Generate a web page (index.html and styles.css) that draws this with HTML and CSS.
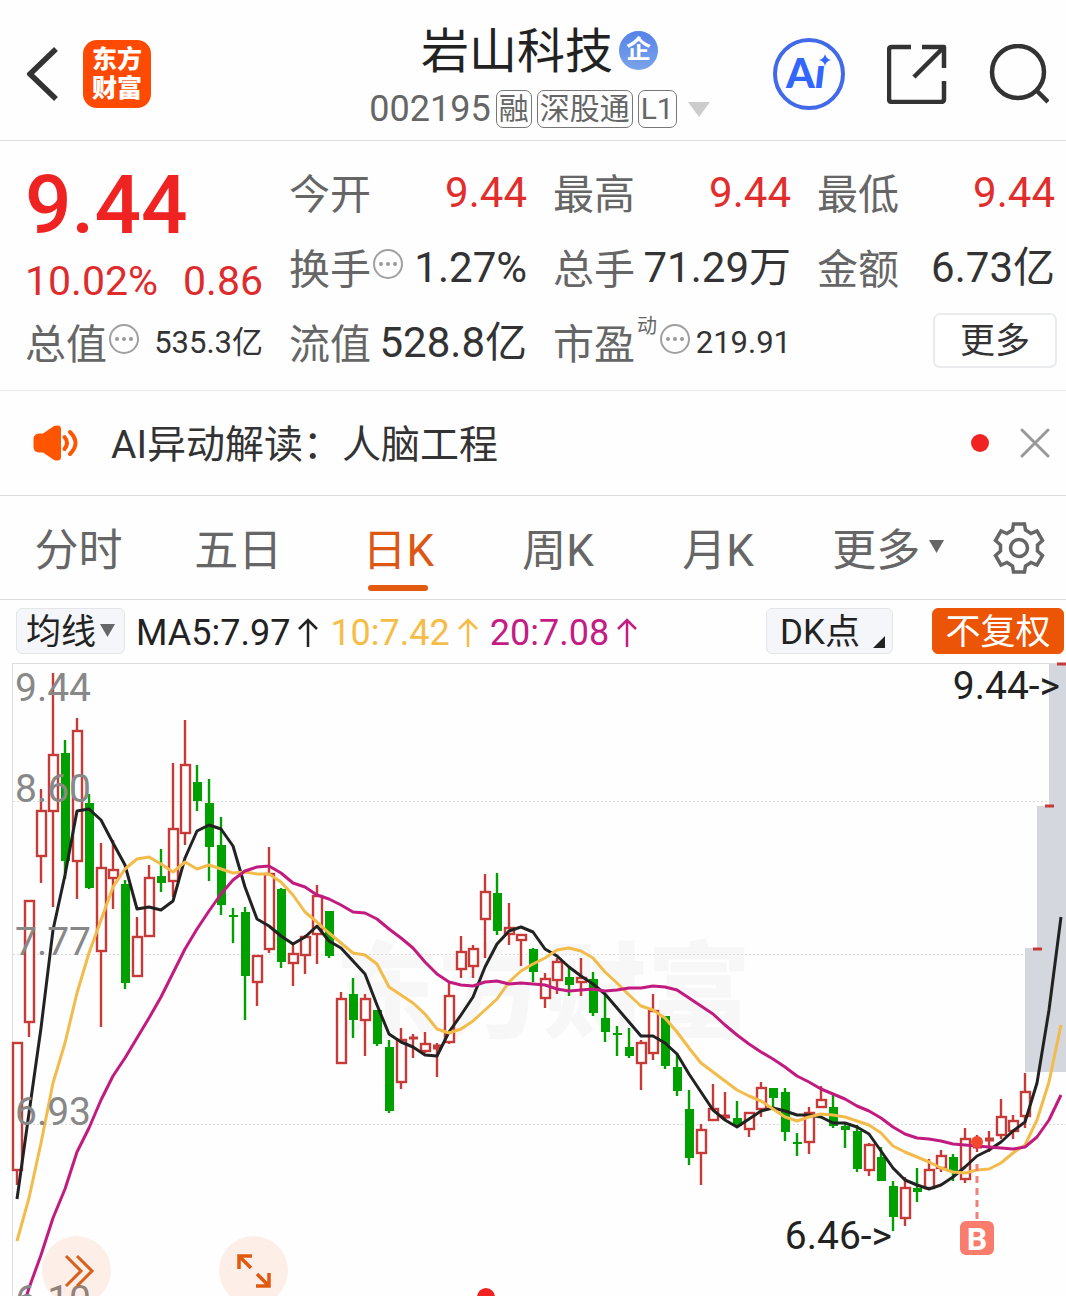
FILE: index.html
```html
<!DOCTYPE html>
<html lang="zh-CN">
<head>
<meta charset="utf-8">
<meta name="viewport" content="width=device-width, initial-scale=1">
<title>岩山科技 002195</title>
<link rel="stylesheet" href="styles.css">
</head>
<body>
<header class="topbar">
  <div class="topbar-side">
    <button class="plain" aria-label="返回">
      <svg class="icon-back" viewBox="0 0 34 60"><path d="M29 5 3 30l26 25" fill="none" stroke="#333" stroke-width="5.5"/></svg>
    </button>
    <a class="logo" href="#"><span>东方</span><span>财富</span></a>
  </div>
  <div class="stock">
    <h1 class="stock-name">岩山科技<span class="badge">企</span></h1>
    <button class="plain stock-code">
      <span class="code">002195</span>
      <span class="tag">融</span><span class="tag">深股通</span><span class="tag">L1</span>
      <svg class="icon-drop" viewBox="0 0 22 15"><path d="M0 0h22L11 15z" fill="#ccc"/></svg>
    </button>
  </div>
  <div class="topbar-side topbar-actions">
    <button class="plain" aria-label="AI">
      <svg class="icon-ai" viewBox="0 0 72 72">
        <circle cx="36" cy="36" r="34" fill="none" stroke="#4169e8" stroke-width="4"/>
        <text class="ai-text" x="13" y="50">A</text>
        <text class="ai-text ai-slant" x="42" y="50">ı</text>
        <path d="M52 16q1 5 6 6-5 1-6 6-1-5-6-6 5-1 6-6z" fill="#3366ff"/>
      </svg>
    </button>
    <button class="plain" aria-label="分享">
      <svg class="icon-top" viewBox="0 0 60 60"><path d="M24 3H5Q2 3 2 6v49q0 3 3 3h49q3 0 3-3V37M35 3h22v21M57 3 27 33" fill="none" stroke="#333" stroke-width="4.5" stroke-linejoin="round"/></svg>
    </button>
    <button class="plain" aria-label="搜索">
      <svg class="icon-top" viewBox="0 0 60 60"><circle cx="29" cy="28" r="26" fill="none" stroke="#333" stroke-width="4.5"/><path d="m47 46 12 12" stroke="#333" stroke-width="4.5"/></svg>
    </button>
  </div>
</header>

<section class="quote">
  <div class="price-box">
    <strong class="price">9.44</strong>
    <div class="change"><span>10.02%</span><span>0.86</span></div>
  </div>
  <dl class="stat"><dt>今开</dt><dd class="up">9.44</dd></dl>
  <dl class="stat"><dt>最高</dt><dd class="up">9.44</dd></dl>
  <dl class="stat"><dt>最低</dt><dd class="up">9.44</dd></dl>
  <dl class="stat"><dt>换手<svg class="icon-info" viewBox="0 0 30 30"><use href="#info"/></svg></dt><dd>1.27%</dd></dl>
  <dl class="stat"><dt>总手</dt><dd>71.29万</dd></dl>
  <dl class="stat"><dt>金额</dt><dd>6.73亿</dd></dl>
  <dl class="stat"><dt>总值<svg class="icon-info" viewBox="0 0 30 30"><use href="#info"/></svg></dt><dd class="small">535.3亿</dd></dl>
  <dl class="stat"><dt>流值</dt><dd>528.8亿</dd></dl>
  <dl class="stat"><dt>市盈<sup>动</sup><svg class="icon-info" viewBox="0 0 30 30"><use href="#info"/></svg></dt><dd class="small">219.91</dd></dl>
  <div class="more-cell"><button class="more">更多</button></div>
  <svg class="defs" width="0" height="0"><defs><g id="info"><circle cx="15" cy="15" r="14" fill="none" stroke="#a0a0a0" stroke-width="2"/><g fill="#999"><circle cx="8" cy="15" r="2"/><circle cx="15" cy="15" r="2"/><circle cx="22" cy="15" r="2"/></g></g></defs></svg>
</section>

<section class="notice">
  <svg class="icon-speaker" viewBox="0 0 46 36"><path d="M6 8.500H10L21 1Q28-1 28 4V32Q28 37 21 35L10 27.500H6Q.5 27 .5 22V14Q.5 9 6 8.500Z" fill="#ff5500"/><path d="M31.500 12q5 6 0 12M37 7q11 11 0 22" fill="none" stroke="#ff5500" stroke-width="4" stroke-linecap="round"/></svg>
  <a class="notice-text" href="#">AI异动解读：人脑工程</a>
  <span class="dot"></span>
  <button class="plain" aria-label="关闭"><svg class="icon-close" viewBox="0 0 30 30"><path d="m2 2 26 26M28 2 2 28" stroke="#999" stroke-width="3" stroke-linecap="round"/></svg></button>
</section>

<nav class="tabs">
  <button class="tab">分时</button>
  <button class="tab">五日</button>
  <button class="tab active">日K</button>
  <button class="tab">周K</button>
  <button class="tab">月K</button>
  <button class="tab tab-more">更多<svg class="icon-small" viewBox="0 0 14 12"><path d="M0 0h14L7 12z" fill="#666"/></svg></button>
  <button class="tab-gear" aria-label="设置"><svg class="icon-gear" viewBox="0 0 52 52"><path d="M20.500 2H31.500L32.500 8 38 11.500 44 9 49.500 18.500 44.500 23V29L49.500 33.500 44 43 38 40.500 32.500 44 31.500 50H20.500L19.500 44 14 40.500 8 43 2.500 33.500 7.500 29V23L2.500 18.500 8 9 14 11.500 19.500 8Z" fill="none" stroke="#666" stroke-width="3.500"/><circle cx="26" cy="26" r="8.500" fill="none" stroke="#666" stroke-width="3.500"/></svg></button>
</nav>

<div class="toolbar">
  <button class="chip chip-ma">均线<svg class="icon-small" viewBox="0 0 14 12"><path d="M0 0h14L7 12z" fill="#666"/></svg></button>
  <div class="legend">
    <span class="ma ma5">MA5:7.97<svg class="icon-up" viewBox="0 0 20 30"><use href="#up"/></svg></span>
    <span class="ma ma10">10:7.42<svg class="icon-up" viewBox="0 0 20 30"><use href="#up"/></svg></span>
    <span class="ma ma20">20:7.08<svg class="icon-up" viewBox="0 0 20 30"><use href="#up"/></svg></span>
  </div>
  <svg class="defs" width="0" height="0"><defs><path id="up" d="M10 29V2M1 11l9-9 9 9" fill="none" stroke="currentColor" stroke-width="2.500"/></defs></svg>
  <button class="chip chip-dk">DK点<svg class="icon-corner" viewBox="0 0 12 12"><path d="M12 0v12H0z" fill="#222"/></svg></button>
  <button class="chip chip-adjust">不复权</button>
</div>

<main class="chart">
  <svg id="kline" class="kline" viewBox="0 662 1066 634" role="img" aria-label="日K线图"></svg>
  <button class="float float-forward" aria-label="展开"><svg class="icon-float" viewBox="0 0 36 36"><path d="m7 3 15 15L7 33M18 3l15 15-15 15" fill="none" stroke="#d9601c" stroke-width="3"/></svg></button>
  <button class="float float-expand" aria-label="全屏"><svg class="icon-float" viewBox="0 0 36 36"><path d="M3 16V3h13M3 3l12 12M33 20v13H20M33 33 21 21" fill="none" stroke="#e0590f" stroke-width="3.500"/></svg></button>
  <span class="dot chart-dot"></span>
</main>
<script src="chart.js"></script>
</body>
</html>
```
FILE: styles.css
```css
* { box-sizing: border-box; }

body {
  margin: 0;
  background: #fefefe;
  color: #333;
  font-family: Roboto, "Noto Sans CJK SC", sans-serif;
  overflow-x: hidden;
}

button {
  font-family: inherit;
  color: inherit;
  padding: 0;
  cursor: pointer;
}

a { color: inherit; text-decoration: none; }
svg { display: block; flex: none; }
.defs { position: absolute; }
.plain { border: 0; background: none; }

/* Top bar */
.topbar {
  display: grid;
  grid-template-columns: 1fr auto 1fr;
  align-items: center;
  padding: 20px 17px 12px 27px;
  border-bottom: 1px solid #ddd;
}
.topbar-side {
  display: flex;
  align-items: center;
  align-self: start;
  gap: 22px;
  height: 108px;
}
.topbar-actions { justify-content: flex-end; gap: 42px; }
.icon-back { width: 34px; height: 60px; }
.icon-ai { width: 72px; height: 72px; }
.icon-top { width: 60px; height: 60px; }
.ai-text { font: 900 41px Lato, sans-serif; fill: #3366ff; }
.ai-slant { font-style: italic; }
.logo {
  display: flex;
  flex-direction: column;
  align-items: center;
  justify-content: center;
  width: 68px;
  height: 68px;
  border-radius: 14px;
  background: #ff4a03;
  color: #fff;
  font-size: 25px;
  font-weight: 900;
  line-height: 29px;
}
.stock {
  display: flex;
  flex-direction: column;
  align-items: center;
  gap: 8px;
  padding-left: 3px;
}
.stock-name {
  display: flex;
  align-items: center;
  gap: 6px;
  margin: 0;
  padding-top: 2px;
  color: #222;
  font-size: 48px;
  font-weight: 400;
  line-height: 60px;
}
.badge {
  width: 39px;
  height: 39px;
  margin-bottom: 4px;
  border-radius: 50%;
  background: linear-gradient(#5583e8, #7ba3ea);
  color: #fff;
  font-size: 25px;
  font-weight: 700;
  line-height: 38px;
  text-align: center;
}
.stock-code { display: flex; align-items: center; gap: 5px; color: #666; }
.code { font-size: 36px; line-height: 38px; }
.tag {
  padding: 0 2px;
  border: 1px solid #777;
  border-radius: 7px;
  font-size: 30px;
  line-height: 36px;
}
.icon-drop { width: 22px; height: 15px; margin-left: 6px; }

/* Quote */
.quote {
  display: grid;
  grid-template-columns: repeat(4, 1fr);
  grid-auto-rows: 75px;
  column-gap: 26px;
  padding: 14px 11px 10px 25px;
  border-bottom: 1px solid #e8e8e8;
}
.price-box {
  grid-row: span 2;
  display: flex;
  flex-direction: column;
  color: #f02323;
}
.price { font-size: 82px; font-weight: 500; line-height: 100px; }
.change {
  display: flex;
  justify-content: space-between;
  color: #de2c2c;
  font-size: 41px;
  line-height: 52px;
}
.stat {
  display: flex;
  align-items: center;
  justify-content: space-between;
  margin: 0;
  line-height: 74px;
  white-space: nowrap;
}
.stat dt { display: flex; align-items: center; padding-top: 4px; color: #666; font-size: 41px; }
.stat dd { margin: 0; font-size: 42px; }
.stat dd.up { color: #e22d2d; }
.stat dd.small { font-size: 31px; }
.stat sup { align-self: flex-start; margin: 6px 1px 0 2px; font-size: 20px; line-height: 24px; }
.icon-info { width: 30px; height: 30px; margin: 0 0 11px 2px; }
.more-cell { display: flex; align-items: center; justify-content: flex-end; }
.more {
  width: 124px;
  height: 55px;
  margin-right: -2px;
  margin-bottom: 4px;
  padding-top: 2px;
  border: 2px solid #e9ebed;
  border-radius: 7px;
  background: #fff;
  font-size: 35px;
  line-height: 50px;
}

/* Notice */
.notice {
  display: flex;
  align-items: center;
  height: 105px;
  padding: 0 16px 0 33px;
  border-bottom: 1px solid #dcdcde;
}
.icon-speaker { width: 46px; height: 36px; margin-right: 32px; }
.notice-text { flex: 1; padding-bottom: 4px; font-size: 39px; }
.dot { width: 18px; height: 18px; border-radius: 50%; background: #f02323; }
.icon-close { width: 30px; height: 30px; margin-left: 31px; }

/* Tabs */
.tabs {
  display: flex;
  height: 104px;
  border-bottom: 1px solid #dcdcde;
}
.tab {
  position: relative;
  flex: 0 0 15%;
  display: flex;
  align-items: center;
  justify-content: center;
  border: 0;
  background: none;
  padding: 0 3px 2px 0;
  color: #666;
  font-size: 44px;
}
.tab.active { color: #dd5714; }
.tab.active::after {
  content: "";
  position: absolute;
  bottom: 8px;
  width: 60px;
  height: 6px;
  border-radius: 3px;
  background: #e25a10;
}
.tab-more { flex: 1; gap: 9px; padding-left: 8px; }
.tab-gear { width: 94px; display: grid; place-items: center; border: 0; background: none; }
.icon-gear { width: 52px; height: 52px; }
.icon-small { width: 15px; height: 13px; }

/* Indicator toolbar */
.toolbar {
  display: flex;
  align-items: center;
  height: 62px;
  padding: 0 2px 0 16px;
  color: #222;
}
.chip {
  display: flex;
  align-items: center;
  justify-content: center;
  height: 46px;
  padding-top: 4px;
  border: 1px solid #e3e5e8;
  border-radius: 6px;
  background: #f5f6f9;
  font-size: 35px;
  line-height: 44px;
}
.chip .icon-small { margin-bottom: 5px; }
.chip-ma { width: 109px; gap: 4px; }
.legend { display: flex; flex: 1; gap: 12px; padding: 3px 0 0 11px; }
.ma { display: flex; align-items: center; gap: 8px; font-size: 36px; }
.ma10 { color: #f5bd48; }
.ma20 { color: #c41c84; }
.icon-up { width: 20px; height: 30px; }
.chip-dk { width: 127px; gap: 13px; padding-left: 6px; margin-right: 39px; }
.icon-corner { width: 12px; height: 12px; align-self: flex-end; margin-bottom: 5px; }
.chip-adjust { width: 132px; border-color: #eb5505; background: #eb5505; color: #fff; }

/* Chart */
.chart { position: relative; overflow: hidden; }
.kline { width: 100%; height: auto; }
.kline .grid { stroke: #ddd; stroke-dasharray: 2 2; }
.kline .frame { stroke: #ddd; fill: none; }
.kline .limit { fill: #d4d7dd; }
.kline .watermark { font-size: 104px; font-weight: 900; fill: #f7f7f7; }
.kline .rise { stroke: #c63a37; stroke-width: 2.4; fill: none; }
.kline .hollow { fill: #fefefe; }
.kline .solid { fill: #c63a37; }
.kline .fall { stroke: #00a000; stroke-width: 2.4; }
.kline .fall-body { fill: #00a000; }
.kline .line { fill: none; stroke-width: 3; stroke-linejoin: round; }
.kline .axis { font-size: 39px; fill: #888; }
.kline .mark { font-size: 39px; fill: #222; text-anchor: end; }
.kline .buy { font-size: 32px; font-weight: 700; fill: #fff; text-anchor: middle; }

.float {
  position: absolute;
  bottom: -9px;
  display: grid;
  place-items: center;
  width: 69px;
  height: 69px;
  border: 0;
  border-radius: 50%;
  background: rgba(240, 90, 10, 0.09);
}
.float-forward { left: 42px; }
.float-expand { left: 219px; }
.icon-float { width: 36px; height: 36px; }
.chart-dot { position: absolute; left: 477px; bottom: -10px; }
```
FILE: chart.js
```js
// Candles, 12 units apart: [kind, high, body top, body bottom, low]
// r = hollow rising, R = filled rising, g = falling
const candles = [
  ["r",1043,1043,1170,1185],["r",901,901,1022,1037],["r",789,811,856,883],["r",673,755,811,907],
  ["g",740,753,861,879],["r",718,731,861,899],["g",794,803,888,889],["r",843,868,951,1027],
  ["r",840,870,878,909],["g",880,884,983,989],["r",917,937,976,976],["r",865,878,936,936],
  ["g",849,876,883,892],["r",763,829,881,897],["r",720,765,833,845],["g",765,782,801,811],
  ["g",779,803,847,881],["g",817,845,905,915],["g",908,915,917,943],["g",907,912,976,1020],
  ["r",955,956,982,1006],["r",847,874,949,953],["g",888,889,962,968],["r",943,954,963,986],
  ["r",935,937,955,974],["r",885,896,934,964],["g",911,911,956,958],["r",992,999,1063,1063],
  ["g",978,994,1020,1038],["r",994,999,1020,1056],["g",1010,1010,1044,1046],["g",1040,1047,1111,1113],
  ["r",1028,1040,1082,1089],["R",1034,1037,1039,1058],["r",1032,1044,1051,1053],["R",1043,1045,1049,1077],
  ["r",982,996,1042,1044],["r",936,952,969,978],["r",945,949,966,978],["r",874,892,919,958],
  ["g",873,893,931,935],["r",903,928,934,945],["r",934,935,940,966],["g",948,949,972,982],
  ["r",973,979,998,1008],["r",958,962,980,994],["g",967,977,985,996],["r",958,978,982,996],
  ["g",972,979,1013,1016],["g",994,1018,1032,1042],["g",1026,1033,1035,1056],["g",1028,1047,1056,1058],
  ["r",1040,1043,1063,1090],["r",994,1011,1053,1060],["g",1016,1016,1066,1069],["g",1053,1067,1091,1096],
  ["g",1090,1109,1158,1165],["r",1124,1130,1153,1185],["r",1084,1109,1120,1121],["R",1092,1115,1118,1119],
  ["g",1101,1118,1126,1127],["r",1112,1113,1129,1137],["r",1082,1088,1109,1117],["g",1088,1088,1098,1108],
  ["g",1088,1092,1132,1141],["g",1133,1142,1144,1156],["r",1107,1113,1142,1154],["r",1086,1100,1107,1107],
  ["g",1095,1107,1126,1128],["g",1123,1126,1130,1148],["g",1125,1131,1169,1172],["r",1143,1145,1170,1176],
  ["g",1147,1157,1181,1181],["g",1181,1186,1217,1231],["r",1177,1188,1218,1226],["g",1168,1188,1192,1202],
  ["r",1159,1170,1188,1188],["r",1150,1156,1168,1172],["g",1154,1157,1172,1181],["r",1128,1139,1179,1183],
  ["R",1135,1139,1148,1152],["R",1131,1138,1141,1152],["r",1099,1117,1135,1139],["r",1115,1121,1131,1139],
  ["r",1073,1092,1116,1128],["R",948,948,950,950],["R",805,805,807,807],["R",663,663,665,665]
];

const averages = [
  ["#222", [1199,1113,1028,930,875,811,809,820,843,865,909,907,910,901,858,831,825,829,846,887,919,926,936,944,937,926,941,948,961,974,1005,1034,1042,1047,1055,1056,1032,1015,997,967,944,931,927,932,949,956,967,976,984,994,1008,1022,1036,1036,1043,1054,1074,1092,1110,1120,1127,1119,1111,1108,1111,1115,1115,1117,1123,1123,1127,1134,1151,1168,1180,1185,1189,1185,1177,1167,1156,1150,1142,1131,1122,1083,1010,917]],
  ["#f2bb4a", [1241,1198,1143,1083,1043,993,953,920,887,869,859,857,864,872,862,869,865,869,873,872,874,874,882,895,912,922,933,943,953,955,964,987,995,1003,1014,1029,1033,1029,1021,1010,999,982,971,964,958,950,948,951,958,972,983,995,1006,1010,1018,1032,1048,1063,1072,1081,1090,1096,1101,1109,1117,1121,1117,1114,1115,1117,1121,1125,1133,1146,1152,1157,1162,1168,1172,1173,1170,1169,1163,1153,1145,1120,1082,1025]],
  ["#c21b80", [1326,1288,1255,1218,1189,1152,1128,1100,1076,1058,1038,1018,997,973,949,929,911,894,880,871,867,866,873,883,887,895,899,905,912,913,919,929,938,948,962,974,982,985,986,982,981,984,983,984,985,989,991,990,989,991,990,988,988,986,987,990,998,1006,1014,1025,1035,1044,1052,1059,1067,1076,1082,1089,1094,1099,1106,1111,1118,1127,1134,1138,1139,1141,1144,1145,1146,1147,1148,1149,1147,1137,1120,1095]]
];

const x = i => 17 + 12 * i;
const parts = [];
const rect = (cls, left, top, w, h) =>
  parts.push(`<rect class="${cls}" x="${left}" y="${top}" width="${w}" height="${h}"/>`);
const text = (cls, left, base, s) =>
  parts.push(`<text class="${cls}" x="${left}" y="${base}">${s}</text>`);

text("watermark", 335, 1030, "东方财富");
for (const y of [801, 954, 1124]) parts.push(`<path class="grid" d="M13 ${y + 0.5}H1066"/>`);
parts.push('<path class="frame" d="M1066 663.5H12.5V1300"/>');
rect("limit", 1025, 948, 41, 124);
rect("limit", 1037, 806, 29, 143);
rect("limit", 1049, 664, 17, 143);

candles.forEach(([kind, high, top, bottom, low], i) => {
  const c = x(i);
  if (kind === "g") {
    parts.push(`<path class="fall" d="M${c} ${high}V${low}"/>`);
    rect("fall-body", c - 4, top, 9, bottom - top);
  } else if (kind === "R") {
    parts.push(`<path class="rise" d="M${c} ${high}V${low}"/>`);
    rect("solid", c - 4, top - 0.5, 9, bottom - top + 1);
  } else {
    parts.push(`<path class="rise" d="M${c} ${high}V${top}M${c} ${bottom}V${low}"/>`);
    rect("rise hollow", c - 4, top, 9, bottom - top);
  }
});

for (const [color, ys] of averages) {
  parts.push(`<polyline class="line" stroke="${color}" points="${ys.map((y, i) => `${x(i)},${y}`).join(" ")}"/>`);
}

text("axis", 15, 701, "9.44");
text("axis", 15, 802, "8.60");
text("axis", 15, 955, "7.77");
text("axis", 15, 1125, "6.93");
text("axis", 15, 1313, "6.10");
text("mark", 1060, 699, "9.44-&gt;");
text("mark", 892, 1249, "6.46-&gt;");

parts.push('<circle cx="977" cy="1142" r="6" fill="#f4472f"/>');
parts.push('<path d="M977 1164V1220" stroke="#f08078" stroke-width="3" stroke-dasharray="7 5"/>');
parts.push('<rect x="960" y="1221" width="34" height="34" rx="6" fill="#f97c6c"/>');
text("buy", 977, 1250, "B");

document.getElementById("kline").innerHTML = parts.join("");
```
